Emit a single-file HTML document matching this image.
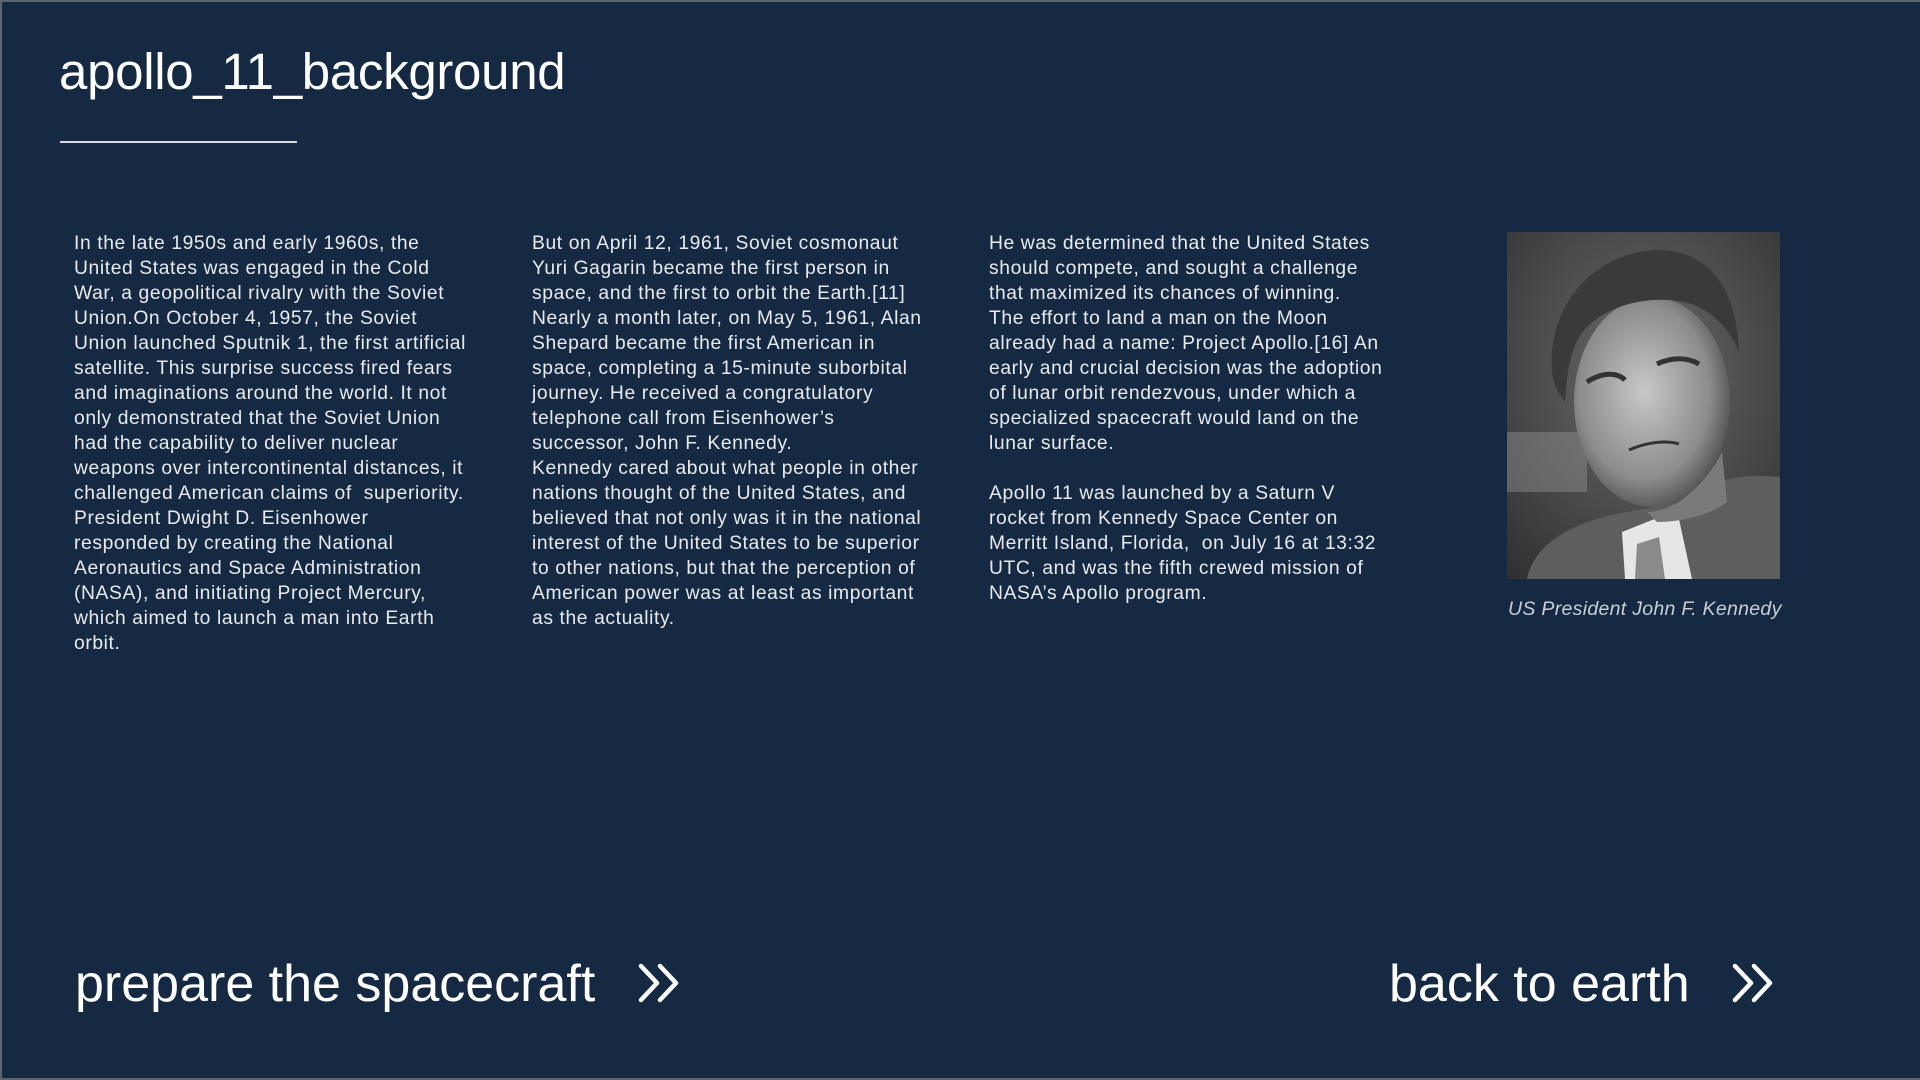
<!DOCTYPE html>
<html><head><meta charset="utf-8"><style>
html,body{margin:0;padding:0}
body{width:1920px;height:1080px;background:#152a42;position:relative;overflow:hidden;font-family:"Liberation Sans",sans-serif;color:#fff;box-sizing:border-box;border:2px solid #5d6670;border-right:none}
.t{position:absolute;left:57px;top:38px;font-size:51px;letter-spacing:-0.3px;line-height:64px;color:#fff}
.hr{position:absolute;left:58px;top:139px;width:237px;height:2px;background:#d8dce2}
.col{position:absolute;top:229px;font-size:19.3px;letter-spacing:0.6px;line-height:25px;color:#e8eaee;white-space:nowrap}
.cap{position:absolute;left:1506px;top:596px;font-size:19.5px;letter-spacing:0.3px;font-style:italic;color:#c9ced6;white-space:nowrap}
.nav{position:absolute;top:950px;font-size:52px;line-height:64px;color:#fff;white-space:nowrap}
svg.arr{position:absolute}
</style></head><body>
<div class="t">apollo_11_background</div>
<div class="hr"></div>
<div class="col" style="left:72px">In the late 1950s and early 1960s, the<br>United States was engaged in the Cold<br>War, a geopolitical rivalry with the Soviet<br>Union.On October 4, 1957, the Soviet<br>Union launched Sputnik 1, the first artificial<br>satellite. This surprise success fired fears<br>and imaginations around the world. It not<br>only demonstrated that the Soviet Union<br>had the capability to deliver nuclear<br>weapons over intercontinental distances, it<br>challenged American claims of &nbsp;superiority.<br>President Dwight D. Eisenhower<br>responded by creating the National<br>Aeronautics and Space Administration<br>(NASA), and initiating Project Mercury,<br>which aimed to launch a man into Earth<br>orbit.</div>
<div class="col" style="left:530px">But on April 12, 1961, Soviet cosmonaut<br>Yuri Gagarin became the first person in<br>space, and the first to orbit the Earth.[11]<br>Nearly a month later, on May 5, 1961, Alan<br>Shepard became the first American in<br>space, completing a 15-minute suborbital<br>journey. He received a congratulatory<br>telephone call from Eisenhower’s<br>successor, John F. Kennedy.<br>Kennedy cared about what people in other<br>nations thought of the United States, and<br>believed that not only was it in the national<br>interest of the United States to be superior<br>to other nations, but that the perception of<br>American power was at least as important<br>as the actuality.</div>
<div class="col" style="left:987px">He was determined that the United States<br>should compete, and sought a challenge<br>that maximized its chances of winning.<br>The effort to land a man on the Moon<br>already had a name: Project Apollo.[16] An<br>early and crucial decision was the adoption<br>of lunar orbit rendezvous, under which a<br>specialized spacecraft would land on the<br>lunar surface.<br><br>Apollo 11 was launched by a Saturn V<br>rocket from Kennedy Space Center on<br>Merritt Island, Florida, &nbsp;on July 16 at 13:32<br>UTC, and was the fifth crewed mission of<br>NASA’s Apollo program.</div>
<svg style="position:absolute;left:1505px;top:230px" width="273" height="347" viewBox="0 0 273 347">
<defs>
<radialGradient id="bg" cx="0.5" cy="0.4" r="0.8"><stop offset="0" stop-color="#6a6a6a"/><stop offset="1" stop-color="#2e2e2e"/></radialGradient>
<radialGradient id="face" cx="0.45" cy="0.45" r="0.6"><stop offset="0" stop-color="#c8c8c8"/><stop offset="0.7" stop-color="#8c8c8c"/><stop offset="1" stop-color="#4a4a4a"/></radialGradient>
</defs>
<rect width="273" height="347" fill="url(#bg)"/>
<rect x="0" y="200" width="80" height="60" fill="#9a9a9a" opacity="0.4"/>
<path d="M20 347 C30 300 90 285 120 280 L175 270 C200 250 230 240 273 245 L273 347 Z" fill="#5e5e5e"/>
<path d="M115 300 L170 278 L185 347 L118 347 Z" fill="#e6e6e6"/>
<path d="M130 312 L152 305 L158 347 L128 347 Z" fill="#8a8a8a"/>
<ellipse cx="145" cy="170" rx="78" ry="105" fill="url(#face)"/>
<path d="M140 280 C170 280 200 250 215 220 L220 270 C200 285 170 290 150 290 Z" fill="#7a7a7a"/>
<path d="M45 140 C40 70 90 20 150 18 C205 18 230 60 232 120 C222 95 205 80 185 72 C150 62 105 70 80 95 C65 110 60 135 58 170 C50 160 46 150 45 140 Z" fill="#3a3a3a"/>
<path d="M80 150 C95 140 110 140 118 148" stroke="#333" stroke-width="5" fill="none"/>
<path d="M150 132 C165 125 180 125 192 132" stroke="#333" stroke-width="5" fill="none"/>
<path d="M122 218 C140 210 160 208 172 212" stroke="#333" stroke-width="3" fill="none"/>
</svg>
<div class="cap">US President John F. Kennedy</div>
<div class="nav" style="left:73px">prepare the spacecraft</div>
<div class="nav" style="left:1387px">back to earth</div>
<svg class="arr" style="left:636px;top:961px" width="44" height="40" viewBox="0 0 44 40"><path d="M3 3 L19 20 L3 37 M22 3 L38 20 L22 37" stroke="#fff" stroke-width="4.5" fill="none" stroke-linecap="round" stroke-linejoin="round"/></svg>
<svg class="arr" style="left:1730px;top:961px" width="44" height="40" viewBox="0 0 44 40"><path d="M3 3 L19 20 L3 37 M22 3 L38 20 L22 37" stroke="#fff" stroke-width="4.5" fill="none" stroke-linecap="round" stroke-linejoin="round"/></svg>
</body></html>
